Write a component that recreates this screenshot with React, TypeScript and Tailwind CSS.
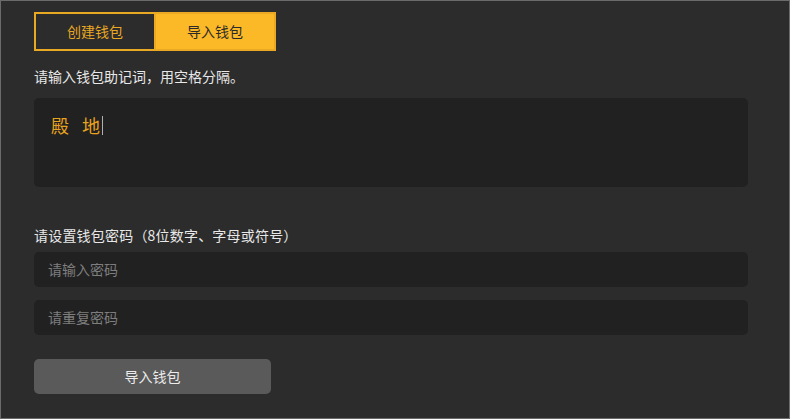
import React from "react";

export default function App() {
  const font = { fontFamily: '"Noto Sans CJK SC", "Noto Sans", sans-serif' };
  return (
    <div
      className="w-[790px] h-[419px] bg-[#2c2c2c] border border-[#6b6b6b] pl-[33px] pt-[11px] flex flex-col"
      style={font}
    >
      <div className="flex w-[242px] h-[39px]">
        <div className="flex-1 border-2 border-[#eaa923] flex items-center justify-center text-[14px] text-[#e9a823]">
          创建钱包
        </div>
        <div className="flex-1 bg-[#fbb827] border-2 border-[#eaa923] border-l-0 flex items-center justify-center text-[14px] text-[#2a2a2a]">
          导入钱包
        </div>
      </div>
      <div className="mt-[15px] h-[20px] leading-[20px] text-[14px] text-[#e8e8e8]">
        请输入钱包助记词，用空格分隔。
      </div>
      <div className="mt-[12px] w-[714px] h-[89px] bg-[#212121] rounded-[5px] pl-[17px] pt-[15px]">
        <div className="flex items-center h-[24px] text-[18px] leading-[24px] text-[#e9a41f]">
          <span>殿</span>
          <span className="ml-[13px]">地</span>
          <span className="inline-block w-px h-[19px] bg-[#b0b0b0] ml-[2px]"></span>
        </div>
      </div>
      <div className="mt-[38px] h-[20px] leading-[20px] text-[14px] text-[#e8e8e8] tracking-[0.2px]">
        请设置钱包密码（8位数字、字母或符号）
      </div>
      <div className="mt-[7px] w-[714px] h-[35px] bg-[#212121] rounded-[5px] pl-[14px] flex items-center text-[14px] text-[#7e7e7e]">
        请输入密码
      </div>
      <div className="mt-[13px] w-[714px] h-[35px] bg-[#212121] rounded-[5px] pl-[14px] flex items-center text-[14px] text-[#7e7e7e]">
        请重复密码
      </div>
      <div className="mt-[24px] w-[237px] h-[35px] bg-[#5a5a5a] rounded-[5px] flex items-center justify-center text-[14px] text-[#ececec]">
        导入钱包
      </div>
    </div>
  );
}
